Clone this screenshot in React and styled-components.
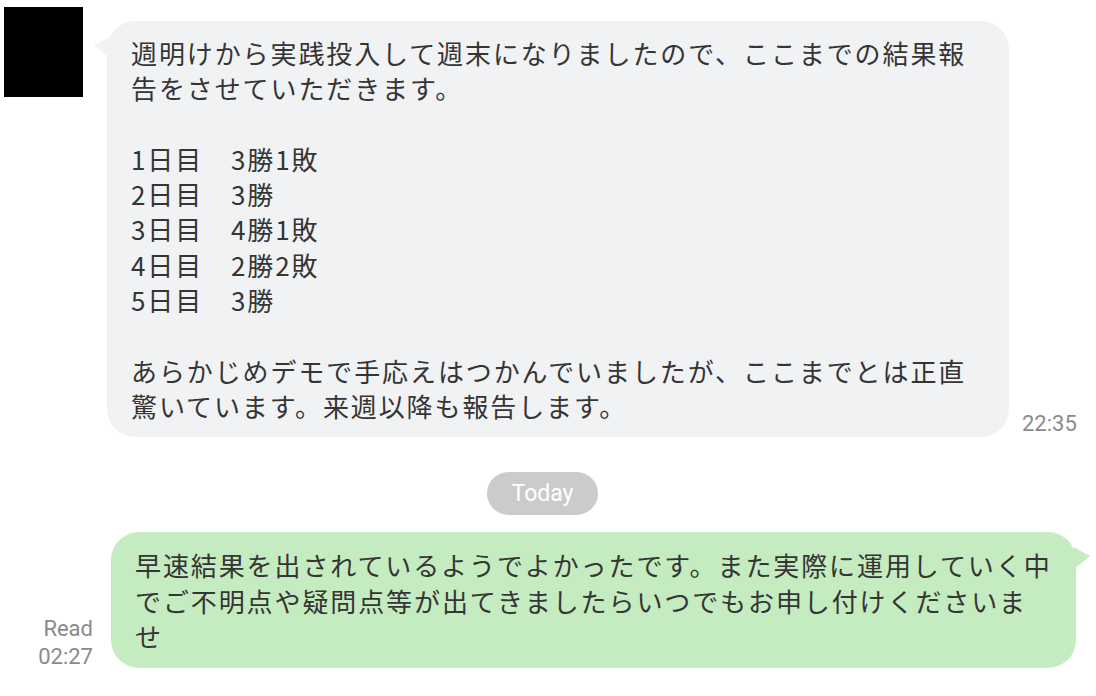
import React from 'react'
import styled, { createGlobalStyle } from 'styled-components'

const GlobalStyle = createGlobalStyle`
    html, body {
        margin: 0;
        padding: 0;
        background: #ffffff;
    }
    body {
        font-family: "Noto Sans CJK JP", "Noto Sans", sans-serif;
    }
`

const ChatContainer = styled.div`
    width: 1096px;
    height: 696px;
    overflow: hidden;
    display: flex;
    flex-direction: column;
`

const IncomingRow = styled.div`
    display: flex;
    align-items: flex-start;
    padding: 7px 0 0 4px;
`

const Avatar = styled.div`
    width: 79px;
    height: 90px;
    background: #000000;
    flex-shrink: 0;
`

const BubbleWrap = styled.div`
    display: flex;
    align-items: flex-end;
    gap: 13px;
    margin: 14px 0 0 ${props => props.left || 0}px;
`

const Bubble = styled.div`
    position: relative;
    box-sizing: border-box;
    width: ${props => props.width}px;
    padding: ${props => props.pad}px 16px ${props => props.pad}px 24px;
    border-radius: 28px;
    background: ${props => props.green ? '#c5ebc0' : '#f1f2f4'};
    color: #353535;
    font-size: 26px;
    line-height: 35.3px;
    letter-spacing: 1.9px;
    white-space: pre-line;

    &::before {
        content: '';
        position: absolute;
        top: ${props => props.green ? '15px' : '16px'};
        ${props => props.green ? 'right: -14px;' : 'left: -13px;'}
        width: 16px;
        height: 22px;
        background: inherit;
        clip-path: ${props => props.green
            ? 'polygon(0 0, 100% 40%, 0 100%)'
            : 'polygon(100% 0, 0 35%, 100% 100%)'};
    }
`

const Stamp = styled.div`
    font-family: Roboto, "Liberation Sans", Arial, sans-serif;
    font-size: 22px;
    line-height: 28px;
    color: #8a8a8a;
    text-align: right;
    margin-bottom: ${props => props.bottom || 0}px;
`

const DateRow = styled.div`
    display: flex;
    justify-content: center;
    padding: 35px 0 17px 0;
`

const DatePill = styled.div`
    width: 111px;
    height: 43px;
    border-radius: 22px;
    background: #cbcbcb;
    color: #ffffff;
    font-family: Roboto, "Liberation Sans", Arial, sans-serif;
    font-size: 23px;
    font-weight: 400;
    display: flex;
    align-items: center;
    justify-content: center;
    margin-left: -11px;
`

const OutgoingRow = styled.div`
    display: flex;
    justify-content: flex-end;
    align-items: flex-end;
    gap: 18px;
    padding-right: 20px;
`

const incomingText = `週明けから実践投入して週末になりましたので、ここまでの結果報
告をさせていただきます。

1日目　3勝1敗
2日目　3勝
3日目　4勝1敗
4日目　2勝2敗
5日目　3勝

あらかじめデモで手応えはつかんでいましたが、ここまでとは正直
驚いています。来週以降も報告します。`

const outgoingText = `早速結果を出されているようでよかったです。また実際に運用していく中
でご不明点や疑問点等が出てきましたらいつでもお申し付けくださいま
せ`

function App() {
    return (
        <>
            <GlobalStyle />
            <ChatContainer>

                {/* INCOMING MESSAGE */}
                <IncomingRow>
                    <Avatar />
                    <BubbleWrap left={24}>
                        <Bubble width={902} pad={14}>{incomingText}</Bubble>
                        <Stamp bottom={-1}>22:35</Stamp>
                    </BubbleWrap>
                </IncomingRow>

                {/* DATE SEPARATOR */}
                <DateRow>
                    <DatePill>Today</DatePill>
                </DateRow>

                {/* OUTGOING MESSAGE */}
                <OutgoingRow>
                    <Stamp bottom={-3}>
                        Read<br />02:27
                    </Stamp>
                    <Bubble green width={965} pad={15}>{outgoingText}</Bubble>
                </OutgoingRow>

            </ChatContainer>
        </>
    )
}

export default App
